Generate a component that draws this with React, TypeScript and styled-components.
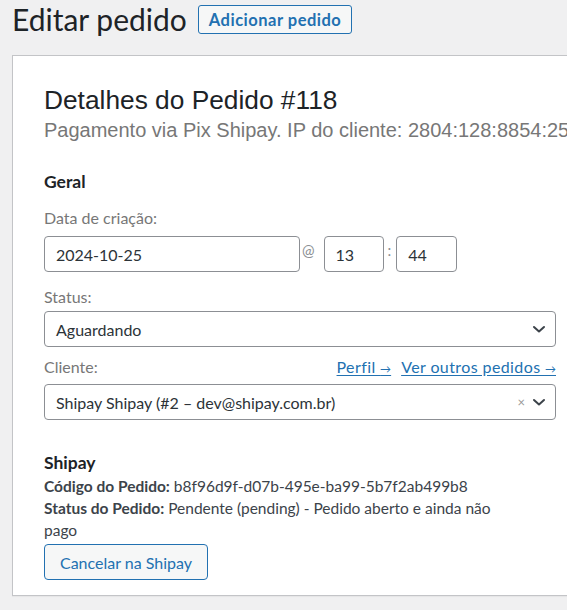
import React from "react";
import styled, { createGlobalStyle } from "styled-components";

const UI_FONT = `Lato, "Noto Sans", sans-serif`;
const HEAD_FONT = `"Liberation Sans", Arial, sans-serif`;

const GlobalStyle = createGlobalStyle`
  html, body {
    margin: 0;
    padding: 0;
    background: #ffffff;
  }
  body {
    font-family: ${UI_FONT};
    color: #3c434a;
  }
  * {
    box-sizing: border-box;
  }
`;

const Screen = styled.div`
  width: 567px;
  height: 610px;
  background: #f0f0f1;
  overflow: hidden;
  padding: 5px 0 0 12px;
`;

const TitleBar = styled.div`
  display: flex;
  align-items: center;
  gap: 11px;
  height: 29px;
`;

const PageTitle = styled.h1`
  margin: 0;
  font-family: ${UI_FONT};
  font-size: 30px;
  font-weight: 400;
  color: #1d2327;
  line-height: 29px;
`;

const TitleAction = styled.button`
  height: 29px;
  padding: 0 10px;
  border: 1px solid #2271b1;
  border-radius: 3px;
  background: #f6f7f7;
  color: #2271b1;
  font-family: ${UI_FONT};
  font-size: 16.5px;
  letter-spacing: 0.5px;
  font-weight: 700;
`;

const Panel = styled.section`
  margin-top: 21px;
  width: 640px;
  background: #ffffff;
  border: 1px solid #c3c4c7;
  box-shadow: 0 1px 1px rgba(0, 0, 0, 0.04);
  padding: 29px 0 15px 31px;
`;

const OrderHeading = styled.h2`
  margin: 0;
  font-family: ${HEAD_FONT};
  font-size: 26.3px;
  font-weight: 400;
  line-height: 31px;
  color: #1d2327;
`;

const OrderMeta = styled.p`
  margin: 2px 0 0;
  font-family: ${HEAD_FONT};
  font-size: 20px;
  line-height: 24px;
  color: #777777;
  white-space: nowrap;
`;

const Column = styled.div`
  width: 512px;
  display: flex;
  flex-direction: column;
`;

const SectionTitle = styled.h3<{ $top: number }>`
  margin: ${(p) => p.$top}px 0 0;
  font-family: ${UI_FONT};
  font-size: 17.5px;
  font-weight: 700;
  line-height: 22px;
  color: #1d2327;
`;

const FieldLabelRow = styled.div<{ $top: number; $bottom: number }>`
  margin-top: ${(p) => p.$top}px;
  margin-bottom: ${(p) => p.$bottom}px;
  display: flex;
  justify-content: space-between;
  align-items: baseline;
  height: 22px;
`;

const FieldLabel = styled.label`
  font-size: 16px;
  line-height: 22px;
  color: #777777;
`;

const Links = styled.div`
  display: flex;
  gap: 10px;
`;

const TextLink = styled.a`
  font-size: 16px;
  line-height: 22px;
  letter-spacing: 0.4px;
  color: #2271b1;
  text-decoration: underline;
  text-underline-offset: 2px;
  white-space: nowrap;
`;

const Arrow = styled.span`
  font-size: 11px;
  letter-spacing: 0;
`;

const DateRow = styled.div`
  display: flex;
  align-items: center;
`;

const Input = styled.div<{ $w: number }>`
  width: ${(p) => p.$w}px;
  height: 36px;
  border: 1px solid #8c8f94;
  border-radius: 4px;
  padding: 0 11px;
  display: flex;
  align-items: center;
  font-size: 16px;
  color: #2c3338;
`;

const Sep = styled.span<{ $l: number; $r: number }>`
  margin: 0 ${(p) => p.$r}px 0 ${(p) => p.$l}px;
  font-size: 15px;
  color: #8c8f94;
  position: relative;
  top: -4px;
`;

const Select = styled.div`
  height: 36px;
  border: 1px solid #8c8f94;
  border-radius: 4px;
  padding: 0 8px 0 11px;
  display: flex;
  align-items: center;
  font-size: 16px;
  color: #2c3338;
`;

const SelectValue = styled.span`
  flex: 1;
`;

const Clear = styled.span`
  font-size: 13px;
  color: #999999;
  margin-right: 6px;
`;

const InfoBlock = styled.div`
  margin-top: 32px;
  max-width: 470px;
  font-size: 15.5px;
  line-height: 22px;
  color: #3c434a;
  p {
    margin: 0;
  }
  strong {
    font-weight: 700;
  }
`;

const InfoTitle = styled.h3`
  margin: 0 0 1px;
  font-size: 17.5px;
  font-weight: 700;
  line-height: 22px;
  color: #1d2327;
`;

const SecondaryButton = styled.button`
  margin-top: 3px;
  height: 36px;
  width: 164px;
  border: 1px solid #2271b1;
  border-radius: 4px;
  background: #f6f7f7;
  color: #2271b1;
  font-family: ${UI_FONT};
  font-size: 16px;
  padding: 0;
`;

const Chevron = () => (
  <svg width="16" height="16" viewBox="0 0 16 16" fill="none">
    <path d="M3 6l5 4.5L13 6" stroke="#3c434a" strokeWidth="2" strokeLinecap="round" strokeLinejoin="round" />
  </svg>
);

export default function App() {
  return (
    <>
      <GlobalStyle />
      <Screen>
        <TitleBar>
          <PageTitle>Editar pedido</PageTitle>
          <TitleAction>Adicionar pedido</TitleAction>
        </TitleBar>
        <Panel>
          <OrderHeading>Detalhes do Pedido #118</OrderHeading>
          <OrderMeta>Pagamento via Pix Shipay. IP do cliente: 2804:128:8854:25</OrderMeta>
          <Column>
            <SectionTitle $top={29}>Geral</SectionTitle>
            <FieldLabelRow $top={14} $bottom={7}>
              <FieldLabel>Data de criação:</FieldLabel>
            </FieldLabelRow>
            <DateRow>
              <Input $w={256}>2024-10-25</Input>
              <Sep $l={2} $r={9}>@</Sep>
              <Input $w={60}>13</Input>
              <Sep $l={4} $r={5}>:</Sep>
              <Input $w={61}>44</Input>
            </DateRow>
            <FieldLabelRow $top={14} $bottom={3}>
              <FieldLabel>Status:</FieldLabel>
            </FieldLabelRow>
            <Select>
              <SelectValue>Aguardando</SelectValue>
              <Chevron />
            </Select>
            <FieldLabelRow $top={9} $bottom={6}>
              <FieldLabel>Cliente:</FieldLabel>
              <Links>
                <TextLink href="#">
                  Perfil <Arrow>→</Arrow>
                </TextLink>
                <TextLink href="#">
                  Ver outros pedidos <Arrow>→</Arrow>
                </TextLink>
              </Links>
            </FieldLabelRow>
            <Select>
              <SelectValue>Shipay Shipay (#2 – dev@shipay.com.br)</SelectValue>
              <Clear>×</Clear>
              <Chevron />
            </Select>
            <InfoBlock>
              <InfoTitle>Shipay</InfoTitle>
              <p>
                <strong>Código do Pedido:</strong> b8f96d9f-d07b-495e-ba99-5b7f2ab499b8
              </p>
              <p>
                <strong>Status do Pedido:</strong> Pendente (pending) - Pedido aberto e ainda não pago
              </p>
              <SecondaryButton>Cancelar na Shipay</SecondaryButton>
            </InfoBlock>
          </Column>
        </Panel>
      </Screen>
    </>
  );
}
